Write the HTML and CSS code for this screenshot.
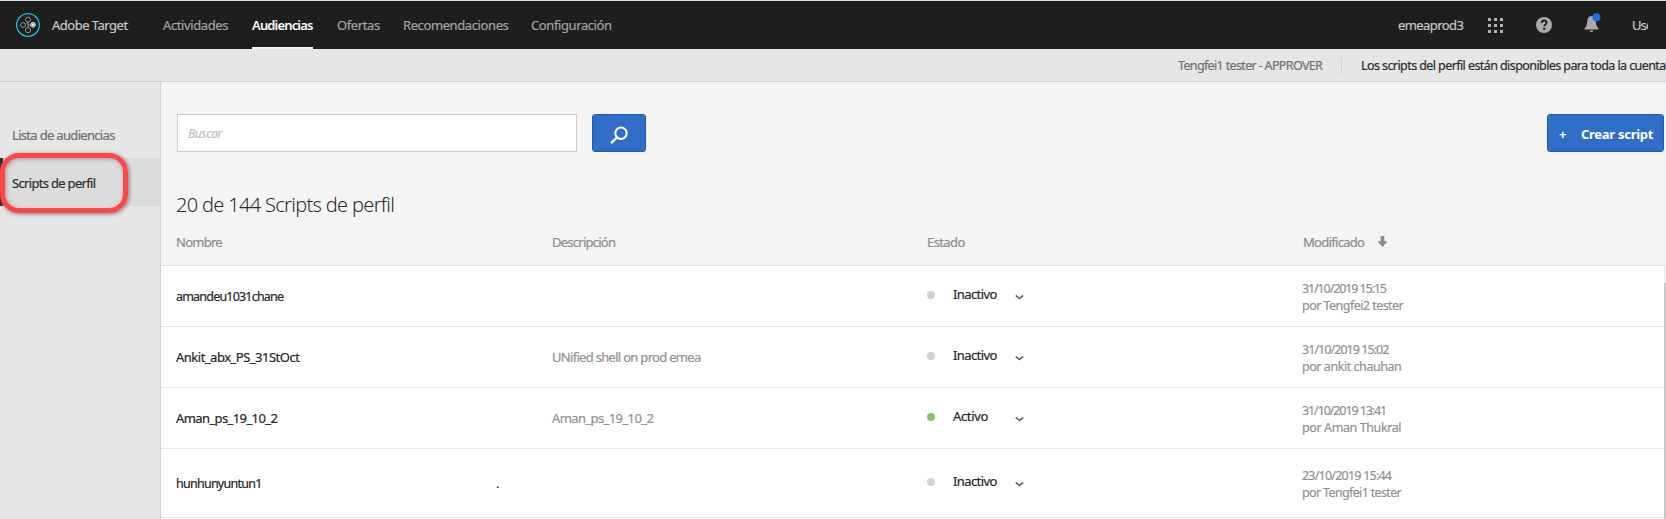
FILE: index.html
```
<!DOCTYPE html>
<html lang="es">
<head>
<meta charset="utf-8">
<title>Adobe Target</title>
<link rel="stylesheet" href="styles.css">
</head>
<body>
<header class="topbar">
  <svg class="logo" viewBox="0 0 24 24" width="24" height="24" fill="none">
    <circle cx="12" cy="12" r="11.3" stroke="#20bde0" stroke-width="1.3"/>
    <g stroke="#8d9599" stroke-width="1">
      <circle cx="12" cy="6.6" r="2.5"/><circle cx="7" cy="12" r="2.5"/><circle cx="12" cy="17.2" r="2.5"/>
      <path d="M12 9v5.5M12 12h2.5M10.500 10.500l1.500-1.500"/>
    </g>
    <circle cx="17" cy="11.800" r="2.400" fill="#8fa6b0" stroke="#c5d8df"/>
    <circle cx="17" cy="11.800" r="1" fill="#fff"/>
  </svg>
  <span class="brand">Adobe Target</span>
  <nav class="nav">
    <a class="nav-item actividades">Actividades</a>
    <a class="nav-item active audiencias">Audiencias</a>
    <a class="nav-item ofertas">Ofertas</a>
    <a class="nav-item recomendaciones">Recomendaciones</a>
    <a class="nav-item configuracion">Configuración</a>
  </nav>
  <div class="tools">
    <span class="org">emeaprod3</span>
    <svg class="apps" width="15" height="15" viewBox="0 0 15 15" fill="#b3b3b3"><path d="M0 0h3v3H0zM6 0h3v3H6zM12 0h3v3h-3zM0 6h3v3H0zM6 6h3v3H6zM12 6h3v3h-3zM0 12h3v3H0zM6 12h3v3H6zM12 12h3v3h-3z"/></svg>
    <svg class="help" width="16" height="16" viewBox="0 0 16 16"><circle cx="8" cy="8" r="8" fill="#ababab"/><path d="M5.700 6.100C5.700 4.300 6.700 3.500 8.100 3.500s2.400.8 2.400 2.200c0 1.700-2.200 1.900-2.200 3.600" fill="none" stroke="#1e1e1e" stroke-width="1.800"/><rect x="7.200" y="10.700" width="2.100" height="2.100" fill="#1e1e1e"/></svg>
    <svg class="bell" width="17" height="20" viewBox="0 0 17 20"><path d="M7.500 3c-3 .2-4.200 2.500-4.300 5.500C3.100 12 2.300 13.500.5 15.500v1h14v-1c-1.800-2-2.600-3.500-2.700-7C11.700 5.500 10.500 3.200 7.500 3zM5.600 17.500h3.800c-.3 1-1 1.500-1.900 1.500s-1.600-.5-1.900-1.500z" fill="#a8a8a8"/><circle cx="12.500" cy="4.200" r="4" fill="#1473e6"/></svg>
    <span class="user">User</span>
  </div>
</header>
<div class="subbar">
  <span class="role">Tengfei1 tester - APPROVER</span>
  <span class="notice">Los scripts del perfil están disponibles para toda la cuenta</span>
</div>
<div class="body">
  <aside class="side">
    <a class="side-item"><span class="lista">Lista de audiencias</span></a>
    <a class="side-item selected"><span class="scripts">Scripts de perfil</span><i class="highlight"></i></a>
  </aside>
  <main class="main">
    <div class="actions">
      <div class="search">Buscar</div>
      <button class="btn search-btn" aria-label="Buscar"><svg width="18" height="18" viewBox="0 0 18 18" fill="none" stroke="#fff" stroke-width="2"><circle cx="11" cy="7.300" r="5.700"/><path d="M7 11.500L1 17.200" stroke-width="2.300"/></svg></button>
      <button class="btn create"><span class="plus">+</span><span class="create-label">Crear script</span></button>
    </div>
    <h1 class="title">20 de 144 Scripts de perfil</h1>
    <div class="grid head">
      <span class="h-nombre">Nombre</span><span class="h-desc">Descripción</span><span class="h-estado">Estado</span>
      <span class="sort"><span class="h-mod">Modificado</span><svg width="9" height="11" viewBox="0 0 9 11"><path d="M2.700 0h3.600v5.300H9v.7L4.500 11 0 6v-.7h2.700z" fill="#8a8a8a"/></svg></span>
    </div>
    <div class="list">
      <div class="rows">
        <div class="grid row">
          <span class="name n1">amandeu1031chane</span><span class="desc"></span>
          <span class="state"><i class="dot"></i><span class="label">Inactivo</span><svg class="chev" width="9" height="5" viewBox="0 0 9 5"><path d="M.7.8C2 1 3.400 2.600 4.500 3.500 5.600 2.600 7 1 8.300.8" fill="none" stroke="#555" stroke-width="1.500"/></svg></span>
          <span class="date"><span class="d1">31/10/2019 15:15</span><br><span class="p1">por Tengfei2 tester</span></span>
        </div>
        <div class="grid row">
          <span class="name n2">Ankit_abx_PS_31StOct</span><span class="desc t2">UNified shell on prod emea</span>
          <span class="state"><i class="dot"></i><span class="label">Inactivo</span><svg class="chev" width="9" height="5" viewBox="0 0 9 5"><path d="M.7.8C2 1 3.400 2.600 4.500 3.500 5.600 2.600 7 1 8.300.8" fill="none" stroke="#555" stroke-width="1.500"/></svg></span>
          <span class="date"><span class="d2">31/10/2019 15:02</span><br><span class="p2">por ankit chauhan</span></span>
        </div>
        <div class="grid row">
          <span class="name n3">Aman_ps_19_10_2</span><span class="desc t3">Aman_ps_19_10_2</span>
          <span class="state"><i class="dot on"></i><span class="label activo">Activo</span><svg class="chev" width="9" height="5" viewBox="0 0 9 5"><path d="M.7.8C2 1 3.400 2.600 4.500 3.500 5.600 2.600 7 1 8.300.8" fill="none" stroke="#555" stroke-width="1.500"/></svg></span>
          <span class="date"><span class="d3">31/10/2019 13:41</span><br><span class="p3">por Aman Thukral</span></span>
        </div>
        <div class="grid row tall">
          <span class="name-cell"><span class="name n4">hunhunyuntun1</span><span class="period">.</span></span><span class="desc"></span>
          <span class="state"><i class="dot"></i><span class="label">Inactivo</span><svg class="chev" width="9" height="5" viewBox="0 0 9 5"><path d="M.7.8C2 1 3.400 2.600 4.500 3.500 5.600 2.600 7 1 8.300.8" fill="none" stroke="#555" stroke-width="1.500"/></svg></span>
          <span class="date"><span class="d4">23/10/2019 15:44</span><br><span class="p4">por Tengfei1 tester</span></span>
        </div>
      </div>
      <div class="scroll"><div class="thumb"></div></div>
    </div>
  </main>
</div>
</body>
</html>
```
FILE: styles.css
```
* { box-sizing: border-box; }
body {
  margin: 0;
  height: 519px;
  overflow: hidden;
  display: flex;
  flex-direction: column;
  font: 13px/17px "Noto Sans", "Open Sans", sans-serif;
  letter-spacing: -0.4px;
  -webkit-text-stroke: 0.2px;
  white-space: nowrap;
  background: #f5f5f5;
  color: #2c2c2c;
}
.topbar {
  flex: none;
  height: 49px;
  border-top: 1px solid #dfe3e0;
  background: #1e1e1e;
  color: #c8c8c8;
  display: flex;
  align-items: center;
  padding-left: 16px;
}
.brand { width: 111px; margin-left: 12px; letter-spacing: -0.5px; }
.nav { display: flex; align-self: stretch; gap: 24px; }
.nav-item { display: flex; align-items: center; color: #a3a3a3; border-bottom: 2px solid transparent; padding-top: 2px; }
.nav-item.active { color: #fff; font-weight: 600; border-color: #f5f5f5; -webkit-text-stroke: 0; }
.actividades { width: 65px; }
.audiencias { width: 61px; letter-spacing: -0.85px; }
.ofertas { width: 42px; }
.recomendaciones { width: 104px; }
.configuracion { width: 78px; }
.tools { margin-left: auto; display: flex; align-items: center; }
.org { width: 66px; letter-spacing: -0.58px; }
.apps { margin-left: 24px; }
.help { margin-left: 33px; }
.bell { margin: -4px 0 0 32px; }
.user { width: 16px; margin: 1px 18px 0 31px; overflow: hidden; letter-spacing: -0.9px; }
.subbar {
  flex: none;
  height: 33px;
  background: #e6e6e6;
  border-bottom: 1px solid #d0d0d0;
  display: flex;
  align-items: center;
  font-size: 12.5px;
  padding-top: 1px;
}
.role, .notice { flex: none; line-height: 17px; }
.role { margin-left: 1178px; width: 164px; color: #707070; border-right: 1px solid #d0d0d0; letter-spacing: -0.65px; }
.notice { margin-left: 19px; letter-spacing: -0.58px; }
.body { flex: 1; display: flex; min-height: 0; }
.side { width: 161px; background: #e6e6e6; border-right: 1px solid #d0d0d0; padding-top: 28px; }
.side-item { position: relative; height: 48px; display: flex; align-items: center; padding: 2px 0 0 12px; color: #707070; letter-spacing: -0.68px; }
.side-item.selected { background: #dcdcdc; color: #2c2c2c; box-shadow: inset 3px 0 #2c2c2c; }
.highlight {
  position: absolute;
  left: 0;
  top: -5px;
  width: 128px;
  height: 60px;
  border: 5px solid #ff4545;
  border-radius: 19px;
  box-shadow: 1px 1px 4px #777, inset 1px 1px 4px #999;
}
.main { flex: 1; min-width: 0; display: flex; flex-direction: column; }
.actions { display: flex; padding: 32px 2px 0 16px; height: 70px; }
.search { width: 400px; height: 38px; background: #fff; border: 1px solid #cdcdcd; padding: 10px; font-style: italic; color: #bfbfbf; font-size: 12px; line-height: 17px; }
.btn { height: 38px; background: #326ec8; border: 1px solid #1e5cbb; border-radius: 3px; color: #fff; display: flex; align-items: center; padding: 0; font: inherit; }
.search-btn { width: 54px; margin-left: 15px; justify-content: center; padding-top: 4px; }
.create { width: 117px; margin-left: auto; padding: 2px 0 0 11px; font-weight: 700; -webkit-text-stroke: 0; }
.plus { width: 22px; text-align: left; }
.create-label { letter-spacing: -0.28px; }
.title { margin: 38px 0 0 15px; font-size: 20px; line-height: 30px; font-weight: 300; letter-spacing: -0.68px; -webkit-text-stroke: 0; }
.grid { display: grid; grid-template-columns: 376px 375px 375px 1fr; padding-left: 15px; }
.head { height: 45px; padding-top: 14px; color: #8c8c8c; letter-spacing: -0.75px; }
.h-estado { letter-spacing: -0.6px; }
.sort { display: flex; gap: 14px; padding-left: 1px; }
.sort svg { margin-top: 2px; }
.h-mod { width: 61px; letter-spacing: -0.7px; }
.list { flex: 1; display: flex; background: #fff; border-top: 1px solid #e1e1e1; min-height: 0; }
.rows { flex: 1; margin-right: 1px; }
.row { height: 61px; align-items: center; border-bottom: 1px solid #e6e6e6; }
.row.tall { height: 69px; }
.date { line-height: 17px; color: #919191; padding-top: 1px; font-size: 12.5px; }
.desc { color: #919191; }
.name, .label { color: #262626; }
.n1 { font-size: 12.5px; letter-spacing: -0.8px; }
.n2 { letter-spacing: -0.5px; }
.n3, .t3 { letter-spacing: -0.6px; }
.n4 { font-size: 12.5px; letter-spacing: -0.75px; }
.t2 { letter-spacing: -0.7px; }
.d1 { letter-spacing: -1.12px; }
.d2 { letter-spacing: -0.95px; }
.d3 { letter-spacing: -1.1px; }
.d4 { letter-spacing: -0.78px; }
.p1 { letter-spacing: -0.54px; }
.p2 { letter-spacing: -0.45px; }
.p3 { letter-spacing: -0.4px; }
.p4 { letter-spacing: -0.65px; }
.state { display: flex; align-items: center; padding-bottom: 3px; }
.dot { width: 8px; height: 8px; border-radius: 50%; background: #d2d2d2; }
.dot.on { background: #8cc35f; }
.label { width: 43px; margin-left: 18px; letter-spacing: -0.6px; }
.label.activo { letter-spacing: -0.35px; }
.chev { margin: 5px 0 0 19px; }
.name-cell { display: flex; }
.name-cell .n4 { width: 320px; }
.scroll { width: 2px; background: #efefef; padding-top: 17px; }
.thumb { height: 100%; background: #c8c8c8; }
```
